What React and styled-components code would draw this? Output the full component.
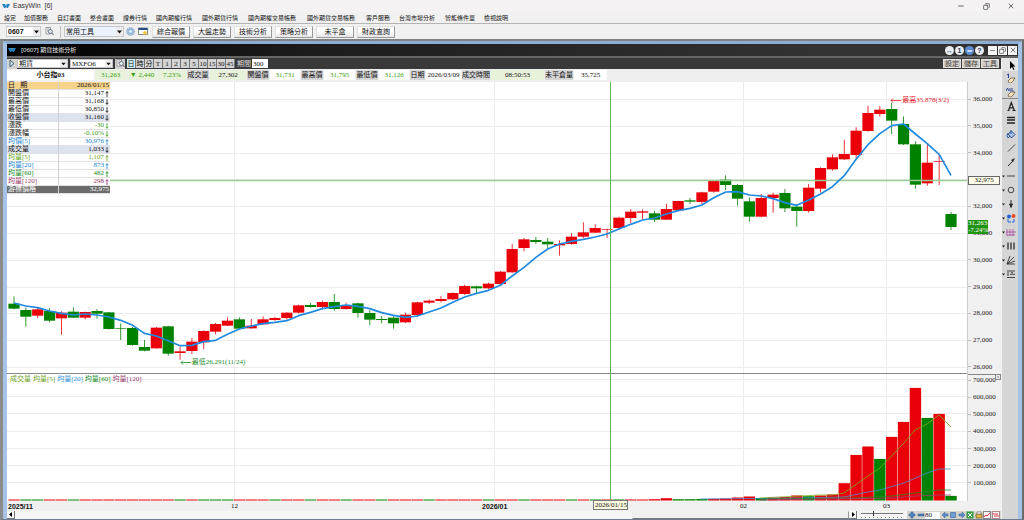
import React, { useState } from 'react';
import styled, { createGlobalStyle, css } from 'styled-components';
import { LuMinus, LuX, LuCopy } from 'react-icons/lu';

const UP = '#ea0009';
const DOWN = '#008200';
const LINE_BLUE = '#1f8ae0';
const FONT_SERIF = '"Liberation Serif", "Noto Sans CJK TC", serif';
const FONT_SANS = '"Liberation Sans", "Noto Sans CJK TC", sans-serif';

const GlobalStyle = createGlobalStyle`
  * {
    box-sizing: border-box;
  }
  body {
    margin: 0;
    background: #efefef;
    color: #111;
    font: 7px/8px ${FONT_SANS};
  }
  button, input, select {
    margin: 0;
    padding: 0;
    border: 0;
    border-radius: 0;
    color: inherit;
    font: inherit;
    background: none;
    appearance: none;
  }
  svg {
    display: block;
  }
`;

/* ---------- data ---------- */

// direction, body top, body bottom, high, low, five day average (three ticks to a unit)
const CANDLE_SETS = [
  {
    base: 840,
    rows: [
      ['d', 71, 86, 49, 88, 69], ['d', 90, 110, 82, 140, 78], ['u', 88, 107, 84, 114, 83],
      ['d', 93, 122, 85, 127, 93], ['u', 98, 115, 94, 164, 100], ['d', 95, 113, 82, 114, 105],
      ['u', 96, 113, 95, 118, 102], ['d', 93, 101, 87, 116, 105], ['d', 97, 147, 96, 149, 111],
      ['d', 145, 147, 130, 180, 121], ['d', 144, 195, 141, 197, 136], ['d', 201, 212, 180, 214, 160],
      ['u', 143, 205, 141, 206, 168], ['d', 139, 221, 137, 227, 182], ['u', 214, 219, 200, 239, 197],
      ['u', 185, 213, 174, 222, 196], ['u', 153, 187, 151, 208, 185], ['u', 132, 155, 129, 163, 181],
      ['u', 122, 137, 112, 138, 163], ['d', 118, 146, 112, 148, 147], ['u', 137, 145, 117, 146, 138],
      ['u', 118, 133, 109, 134, 131], ['u', 114, 120, 110, 123, 127], ['u', 98, 114, 97, 119, 122],
      ['u', 76, 98, 74, 100, 107],
    ],
  },
  {
    base: 600,
    rows: [
      ['d', 315, 321, 309, 323, 337], ['u', 306, 321, 302, 326, 326], ['d', 306, 327, 282, 332, 320],
      ['u', 315, 327, 308, 329, 315], ['d', 310, 339, 308, 353, 319], ['d', 339, 359, 330, 375, 326],
      ['d', 357, 360, 348, 370, 338], ['d', 353, 370, 347, 386, 346], ['u', 344, 367, 338, 369, 352],
      ['u', 307, 345, 305, 350, 348], ['u', 302, 308, 298, 312, 336], ['u', 297, 303, 288, 307, 324],
      ['u', 279, 298, 277, 300, 307], ['u', 258, 282, 254, 285, 291], ['d', 259, 265, 257, 280, 280],
      ['u', 251, 265, 248, 268, 271], ['u', 215, 252, 213, 255, 256], ['u', 147, 217, 132, 219, 228],
      ['u', 118, 144, 114, 154, 202], ['d', 120, 126, 111, 132, 172], ['d', 125, 133, 114, 147, 147],
      ['u', 132, 136, 121, 167, 132], ['u', 110, 132, 99, 134, 124], ['u', 97, 110, 67, 115, 118],
      ['u', 84, 98, 73, 99, 111], ['u', 87, 89, 86, 114, 102], ['u', 53, 84, 50, 86, 87],
    ],
  },
  {
    base: 270,
    rows: [
      ['u', 365, 384, 357, 400, 403], ['u', 364, 368, 359, 388, 390], ['d', 370, 389, 363, 396, 384],
      ['u', 357, 389, 341, 390, 372], ['u', 333, 361, 332, 362, 362], ['d', 331, 335, 324, 342, 355],
      ['u', 307, 336, 305, 342, 345], ['u', 273, 305, 272, 308, 323], ['d', 269, 285, 256, 300, 306],
      ['d', 285, 326, 282, 347, 305], ['d', 334, 380, 322, 395, 315], ['u', 324, 380, 312, 382, 318],
      ['u', 314, 324, 308, 368, 326], ['d', 309, 355, 297, 366, 338], ['d', 350, 363, 342, 410, 346],
      ['u', 293, 363, 282, 368, 330], ['u', 234, 296, 232, 308, 312], ['u', 202, 238, 193, 242, 290],
      ['u', 192, 208, 149, 210, 257], ['u', 122, 195, 112, 205, 208], ['u', 69, 123, 47, 125, 164],
      ['u', 59, 72, 48, 80, 131], ['d', 57, 92, 38, 132, 107], ['d', 102, 163, 79, 165, 102],
      ['d', 163, 284, 154, 296, 132], ['u', 218, 280, 162, 287, 161], ['u', 213, 215, 193, 285, 193],
      ['d', 372, 411, 366, 420, 256],
    ],
  },
];

const CANDLES = CANDLE_SETS.flatMap(({ base, rows }) =>
  rows.map(([dir, ...ticks]) => {
    const [top, bottom, high, low, average] = ticks.map((t) => (t + base) / 3);
    return { dir, top, bottom, high, low, average };
  })
);

const xOf = (i) => 14 + (i * 937) / 79;

const QUIET_DAYS = [1, 2, 5, 14, 16, 17, 18, 22, 25, 28, 31, 35, 40, 43, 47, 49, 51, 56, 57, 58, 63, 67, 73, 77, 79];

const TALL_VOLUMES = [
  1.3, 2.3, 1.3, 1.3, 1.5, 1.7, 2, 3, 4, 2.5, 3, 3.5, 5, 4.3, 5, 6, 17.3, 45.6, 54, 41.6, 63.6, 78.6,
  112.6, 82.6, 86.6, 4.6,
];
const volumeAt = (i) => (i < 54 ? 1 : TALL_VOLUMES[i - 54]);

const VOLUME_LINES = [
  { color: '#7fae1e', points: '760,498 800,496 820,495 832,495 844,493 868,476 880,468 904,443 915,430 927,424 939,415 951,427' },
  { color: '#4a93d0', points: '700,499 800,498 844,497 868,492 880,490 904,483 927,473 939,469 951,469' },
  { color: '#2d8a2d', points: '760,499 856,498 892,496 915,493 939,490 951,490' },
  { color: '#9c4470', points: '760,500 892,498 915,496 939,495 951,495' },
];

const MENUS = [
  ['設定', 20], ['加值服務', 33], ['自訂畫面', 33], ['整合畫面', 33], ['證券行情', 33],
  ['國內期權行情', 46], ['國外期貨行情', 46], ['國內期權交易帳務', 59], ['國外期貨交易帳務', 59],
  ['客戶服務', 33], ['台灣市場分析', 46], ['智能條件單', 39], ['檢視說明', 33],
];

const SHORTCUTS = ['綜合報價', '大盤走勢', '技術分析', '策略分析', '未平盒', '財政查詢'];
const PERIODS = ['日', '時', '分', 'T', '1', '2', '3', '5', '10', '15', '30', '45'];

const QUOTES = [
  { text: '小台指03', w: 87, kind: 'name' },
  { text: '31,263', w: 31, kind: 'tint', green: true },
  { text: '▼ 2,440', w: 30, kind: 'tint', green: true },
  { text: '7.23%', w: 28, kind: 'tint', green: true },
  { text: '成交量', w: 22, kind: 'label' },
  { text: '27,302', w: 36, kind: 'tint' },
  { text: '開盤價', w: 22, kind: 'label' },
  { text: '31,731', w: 30, green: true },
  { text: '最高價', w: 22, kind: 'label' },
  { text: '31,795', w: 31, green: true },
  { text: '最低價', w: 22, kind: 'label' },
  { text: '31,126', w: 30, green: true },
  { text: '日期', w: 15, kind: 'label' },
  { text: '2026/03/09', w: 35 },
  { text: '成交時間', w: 28, kind: 'label' },
  { text: '08:50:53', w: 53, kind: 'tint' },
  { text: '未平倉量', w: 28, kind: 'label' },
  { text: '35,725', w: 33 },
];

const INFO_ROWS = [
  ['開盤價', '31,147', 'up', '#111'],
  ['最高價', '31,168', 'down', '#111'],
  ['最低價', '30,850', 'down', '#111'],
  ['收盤價', '31,160', 'down', '#111', '#dde3ee'],
  ['漲跌', '-30', 'down', '#42a022', null, '#111'],
  ['漲跌幅', '-0.10%', 'down', '#42a022', null, '#111'],
  ['均價[5]', '30,976', 'up', '#2384d4'],
  ['成交量', '1,033', 'down', '#111', '#dde3ee'],
  ['均量[5]', '1,107', 'up', '#69a51c'],
  ['均量[20]', '873', 'up', '#2384d4'],
  ['均量[60]', '482', 'up', '#128a1c'],
  ['均量[120]', '298', 'up', '#96386a'],
];

const PRICES = [36, 35, 34, 33, 32, 31, 30, 29, 28, 27, 26].map((n) => `${n},000`);
const VOLUMES = [7, 6, 5, 4, 3, 2, 1].map((n) => `${n}00,000`);

/* ---------- frame ---------- */

const Page = styled.div`
  display: flex;
  flex-direction: column;
  min-height: 100vh;
`;

const TitleBar = styled.header`
  display: flex;
  align-items: center;
  height: 12px;
  padding: 0 8px 0 2px;
  gap: 3px;
  background: #f5f2f4;
  color: #333;
  white-space: pre;
`;

const Spacer = styled.div`
  flex: 1;
`;

const Gap = styled.div`
  width: 2px;
`;

const RestoreIcon = styled(LuCopy)`
  transform: scaleX(-1);
`;

const CaptionButton = styled.button`
  display: flex;
  justify-content: center;
  width: 10px;
  margin-left: 12px;
  color: #222;
`;

const MenuBar = styled.nav`
  display: flex;
  height: 11px;
  padding-left: 4px;
  font-size: 6px;
  background: #f1f1f1;
`;

const MenuItem = styled.button`
  flex: 0 0 ${({ w }) => w}px;
  text-align: left;
  white-space: nowrap;
`;

const MainToolbar = styled.div`
  display: flex;
  align-items: center;
  height: 16px;
  padding-left: 6px;
  border-top: 1px solid #b4b4b4;
  background: #f0f0f0;
`;

const Divider = styled.i`
  width: 1px;
  height: 12px;
  margin: 0 3px;
  background: #bcbcbc;
`;

const SelectBox = styled.span`
  position: relative;
  display: flex;
  width: ${({ w }) => w}px;
  height: ${({ h }) => h || 11}px;
  border: 1px solid #c4c8cc;
  background: ${({ tint }) => (tint ? '#ebf3fe' : '#fff')};

  select {
    width: 100%;
    padding-left: ${({ pad }) => pad || 1}px;
    font-weight: ${({ bold }) => (bold ? 700 : 400)};
    font-family: ${({ bold }) => (bold ? FONT_SANS : FONT_SERIF)};
    outline: none;
  }

  svg {
    position: absolute;
    top: 0;
    right: 0;
    height: 100%;
    background: #ededed;
    pointer-events: none;
  }
`;

const IconButton = styled.button`
  display: flex;
  align-items: center;
  justify-content: center;
  width: ${({ w }) => w || 10}px;
  height: 10px;
  background: ${({ bg }) => bg || 'transparent'};
`;

const ShortcutBar = styled.div`
  display: flex;
  gap: 3px;
  margin-left: 4px;
`;

const ShortcutButton = styled.button`
  width: 38px;
  height: 12px;
  border: 1px solid #e0e0e0;
  border-right-color: #999;
  border-bottom-color: #999;
  background: linear-gradient(#fff 40%, #e6e6e8);
  white-space: nowrap;
`;

const Workspace = styled.main`
  flex: 1;
  display: flex;
  flex-direction: column;
  border-top: 2px solid #7d8283;
  border-left: 3px solid #8b8b8b;
  border-right: 2px solid #6b6b6b;
  border-bottom: 1px solid #6f7c8b;
`;

const ChildWindow = styled.section`
  flex: 1;
  display: flex;
  flex-direction: column;
  border: 4px solid #a6c3e6;
  border-top: 3px solid #8fadd0;
  border-bottom: 0;
`;

const ChildTitle = styled.div`
  display: flex;
  align-items: center;
  height: 12px;
  padding: 0 1px;
  gap: 1px;
  color: #eee;
  background: linear-gradient(90deg, #000, #1c1c1c 30%, #323232 80%);

  h1 {
    margin: 0 0 0 4px;
    font: 6px/12px "Noto Sans", "Noto Sans CJK TC", sans-serif;
  }
`;

const RoundButton = styled.button`
  width: 9px;
  height: 9px;
  border-radius: 50%;
  background: ${({ blue }) => (blue ? '#5d8cd0' : '#e9edf2')};
  color: ${({ blue }) => (blue ? '#fff' : '#27364e')};
  font-weight: 700;
  line-height: 9px;
`;

const SquareButton = styled.button`
  display: flex;
  align-items: center;
  justify-content: center;
  width: 9px;
  height: 9px;
  background: #f4f4f4;
  color: #333;
`;

const ChildBody = styled.div`
  flex: 1;
  display: grid;
  grid-template-columns: 1fr 17px;
  border-top: 2px solid #666;
`;

const ChartColumn = styled.div`
  display: flex;
  flex-direction: column;
  min-width: 0;
`;

const DarkToolbar = styled.div`
  display: flex;
  align-items: center;
  height: 11px;
  padding-right: 2px;
  background: #393939;
`;

const Periods = styled.div`
  display: flex;
  margin: 0 2px;
  font-family: ${FONT_SERIF};
`;

const PeriodButton = styled.button`
  width: 9px;
  height: 9px;
  border-right: 1px solid #777;
  background: ${({ active }) => (active ? '#cdeff2' : '#d2d2d2')};
`;

const DaysField = styled.label`
  display: flex;
  align-items: center;
  gap: 1px;
  color: #ddd;

  input {
    width: 16px;
    height: 9px;
    padding-left: 1px;
    color: #111;
    background: #fff;
    font-family: ${FONT_SERIF};
  }
`;

const TextButton = styled.button`
  width: 18px;
  height: 9px;
  margin-left: 1px;
  background: #cfccc6;
  border: 1px solid #e6e4e0;
  color: #4a453c;
  line-height: 7px;
`;

const QuoteBar = styled.div`
  display: flex;
  gap: 1px;
  height: 13px;
  padding: 1px 0 2px;
  overflow: hidden;
  background: #efefef;
`;

const QuoteCell = styled.div`
  flex: 0 0 ${({ w }) => w}px;
  line-height: 10px;
  text-align: center;
  white-space: nowrap;
  font-family: ${FONT_SERIF};
  background: #fff;
  color: ${({ green }) => (green ? '#38a012' : '#111')};
  ${({ kind }) => kind === 'tint' && css`background: #e8f2da;`}
  ${({ kind }) => kind === 'label' && css`background: #d6d6d6;`}
  ${({ kind }) => kind === 'name' && css`font-weight: 700;`}
`;

/* ---------- chart ---------- */

const ChartGrid = styled.div`
  flex: 1;
  display: grid;
  grid-template-columns: 1fr 34px;
  min-height: 300px;
`;

const Plot = styled.div`
  position: relative;
  background: #fff;

  > svg {
    position: absolute;
    width: 100%;
    height: 100%;
  }
`;

const Axis = styled.div`
  position: relative;
  display: grid;
  grid-template-rows: 292fr 127fr;
  background: #f0f0f0;
  border-left: 1px solid #ccc;
  font-family: ${FONT_SERIF};
  color: #222;
`;

const Scale = styled.ol`
  display: flex;
  flex-direction: column;
  justify-content: space-between;
  margin: 0;
  padding: ${({ volume }) => (volume ? '1px 0 14px' : '13px 0 3px')};
  list-style: none;
  ${({ volume }) => volume && css`border-top: 1px solid #888;`}

  li {
    display: flex;
    align-items: center;
    gap: 2px;
  }

  li::before {
    content: '';
    width: 3px;
    height: 1px;
    background: #bbb;
  }
`;

const CursorPrice = styled.output`
  position: absolute;
  top: 94px;
  left: 0;
  right: 1px;
  height: 9px;
  border: 1px solid #666;
  background: #fdfde9;
  color: #111;
  line-height: 7px;
  text-align: center;
`;

const LastPrice = styled.output`
  position: absolute;
  top: 138px;
  left: 0;
  width: 20px;
  overflow: hidden;
  background: #1f9410;
  color: #fff;
  line-height: 7px;
  white-space: nowrap;
`;

const ClosePane = styled.button`
  position: absolute;
  top: 292px;
  right: 0;
  width: 6px;
  height: 6px;
  border: 1px solid #888;
  color: #333;
`;

const InfoTable = styled.table`
  position: absolute;
  top: 0;
  left: 0;
  width: 103px;
  border-spacing: 0;
  background: #fff;
  font-family: ${FONT_SERIF};
`;

const InfoRow = styled.tr`
  color: ${({ ink }) => ink};
  background: ${({ bg }) => bg || '#fff'};

  th, td {
    height: 8px;
    padding: 0 1px;
    border-bottom: 1px solid #e2e2e2;
    font-weight: 400;
    line-height: 7px;
    text-align: left;
    white-space: pre;
  }

  th {
    width: 52px;
    color: ${({ labelInk }) => labelInk || 'inherit'};
    border-right: 1px solid #d0d0d0;
  }
`;

const InfoValue = styled.div`
  display: flex;
  align-items: center;
  justify-content: flex-end;
  gap: 1px;
  height: 7px;
`;

const Legend = styled.div`
  position: absolute;
  top: 70%;
  left: 3px;
  display: flex;
  gap: 2px;
  font-family: ${FONT_SERIF};
`;

const LegendItem = styled.span`
  color: ${({ color }) => color};
`;

const Callout = styled.span`
  position: absolute;
  top: ${({ top }) => top}px;
  left: ${({ left }) => left}%;
  display: flex;
  align-items: center;
  gap: 1px;
  color: ${({ color }) => color};
  font-family: ${FONT_SERIF};
  white-space: nowrap;
`;

const DateAxis = styled.div`
  position: relative;
  display: grid;
  grid-template-columns: 223fr 251fr 258fr 143fr 118fr;
  height: 10px;
  padding-left: 1px;
  background: #f0f0f0;
  font-family: ${FONT_SERIF};
  line-height: 11px;

  b {
    font-family: ${FONT_SANS};
  }
`;

const DateTag = styled.output`
  position: absolute;
  top: -1px;
  left: 59%;
  width: 35px;
  height: 10px;
  border: 1px solid #777;
  background: #fbfbdf;
  line-height: 8px;
  text-align: center;
`;

const BottomBar = styled.div`
  display: flex;
  align-items: center;
  height: 8px;
  background: #f5f5f5;
`;

const ScrollTrack = styled.div`
  flex: 1;
  display: flex;
  justify-content: flex-end;
  height: 8px;
`;

const ScrollThumb = styled.div`
  width: 26%;
  border: 1px solid #eee;
  border-right-color: #999;
  border-bottom-color: #777;
  background: #f0f0f0;
`;

const ScrollButton = styled.button`
  display: flex;
  align-items: center;
  justify-content: center;
  width: 8px;
  height: 8px;
  border-right: 1px solid #777;
  border-bottom: 1px solid #777;
  background: #fafafa;
`;

const ZoomSlider = styled.input`
  width: 42px;
  height: 8px;
  margin: 0 4px;
  background:
    linear-gradient(#777, #777) 0 2px / 100% 1px no-repeat,
    repeating-linear-gradient(90deg, #888 0 1px, transparent 1px 4px) 0 6px / 100% 1px no-repeat;

  &::-webkit-slider-thumb {
    appearance: none;
    width: 1px;
    height: 5px;
    margin-bottom: 3px;
    background: #333;
  }
`;

const ChartTools = styled.div`
  display: flex;
  align-items: center;
  justify-content: space-between;
  width: 94px;
  height: 8px;
  padding: 0 1px;
  background: #d6d3cd;

  button {
    width: 8px;
    height: 8px;
  }

  input {
    width: 15px;
    height: 7px;
    background: #fff;
    font-family: ${FONT_SERIF};
    line-height: 7px;
  }
`;

const Palette = styled.aside`
  display: flex;
  flex-direction: column;
  background: #d5d5d5;
  border-left: 1px solid #f2f2f2;
`;

const PaletteButton = styled.button`
  display: flex;
  align-items: center;
  justify-content: flex-end;
  height: 14px;
  padding-right: 2px;
  gap: 1px;
  ${({ divided }) => divided && css`border-bottom: 1px solid #888;`}

  &:first-child {
    height: 13px;
    background: #e6e6e6;
  }
`;

/* ---------- icons ---------- */

const Logo = () => (
  <svg width="8" height="6" viewBox="0 0 8 6" aria-hidden="true">
    <path d="M0 1h3l1 2 1-2h3L6 5H5L4 4 3 5H2z" fill="#2481bd" />
    <path d="M3 1h2L4 3z" fill="#83c3df" />
  </svg>
);

const DownArrow = () => (
  <svg width="7" viewBox="0 0 7 8" aria-hidden="true">
    <path d="M1 3h5L3.500 6z" fill="#111" />
  </svg>
);

const SearchPageIcon = () => (
  <svg width="9" height="9" viewBox="0 0 9 9" fill="none" aria-hidden="true">
    <path d="M1 .5h4.500V7H1zM2 2h2M2 4h1" stroke="#777" fill="#fff" strokeWidth=".7" />
    <circle cx="5.300" cy="4.500" r="2" stroke="#557" fill="#e6f4f2" strokeWidth=".8" />
    <path d="M6.700 6 8.500 8" stroke="#555" />
  </svg>
);

const GearIcon = () => (
  <svg width="9" height="9" viewBox="0 0 9 9" fill="none" aria-hidden="true">
    <circle cx="4.500" cy="4.500" r="3.700" stroke="#7ba3c9" strokeWidth="1.200" strokeDasharray="1.500 .7" />
    <circle cx="4.500" cy="4.500" r="2.700" fill="#a8c8e6" stroke="#6c96bf" strokeWidth=".6" />
    <circle cx="4.500" cy="4.500" r="1.100" fill="#fff" />
  </svg>
);

const WindowStarIcon = () => (
  <svg width="10" height="9" viewBox="0 0 10 9" aria-hidden="true">
    <path d="M.5 1h9v6.500h-9z" fill="#fff" stroke="#456" strokeWidth=".7" />
    <path d="M.5 1h9v2h-9z" fill="#2c4f86" />
    <path d="m7 3 .8 1.700 2 .2-1.500 1.300.4 2L7 7.300l-1.700.9.4-2-1.500-1.300 2-.2z" fill="#f0c33c" />
  </svg>
);

const PlayIcon = () => (
  <svg width="8" height="9" viewBox="0 0 8 9" aria-hidden="true">
    <path d="M2 1v7l4-3.500z" fill="#bfe1ee" stroke="#345" strokeWidth=".8" />
  </svg>
);

const ArrowLeft = () => (
  <svg width="11" height="5" viewBox="0 0 11 5" fill="none" stroke="currentColor" strokeWidth=".8" aria-hidden="true">
    <path d="M11 2.500H1M3 .5l-2 2 2 2" />
  </svg>
);

const TrendArrow = ({ dir }) => (
  <svg width="4" height="6" viewBox="0 0 4 6" fill="none" stroke="currentColor" strokeWidth=".8" aria-label={dir}>
    <path d={dir === 'up' ? 'M2 6V.7M.5 2.300 2 .7l1.500 1.600' : 'M2 0v5.300M.5 3.700 2 5.300l1.500-1.600'} />
  </svg>
);

const TriangleIcon = ({ right }) => (
  <svg width="4" height="5" viewBox="0 0 4 5" aria-hidden="true">
    <path d={right ? 'M1 0v5l3-2.500z' : 'M3 0v5L0 2.500z'} fill="#000" />
  </svg>
);

const eraser = <path d="m2 8 3-3h4L7 8l-2 2H3z" fill="#fbe4b8" stroke="#54463a" strokeWidth=".7" />;

const PALETTE = [
  { name: '指標', art: <path d="M4 1v8l2-2 1.500 3 1-.5L7 6.500h2.500z" fill="#000" /> },
  { name: '擦除', art: <>{eraser}<path d="m1 2 1.500-1v4" stroke="#23459c" fill="none" /></> },
  { name: '全部擦除', divided: true, art: <>{eraser}<path d="M0 4l1.500-3L3 4M4 1v3h1M6 1v3h1.500" stroke="#2b3f99" fill="none" strokeWidth=".9" /></> },
  { name: '文字', art: <path d="M1.500 9.500h2M6.500 9.500h3M2.500 9.500 5.300 1.500 8.300 9.500M3.500 6.800h3.800" stroke="#222" fill="none" strokeWidth="1.200" /> },
  { name: '線寬', art: <path d="M1 2.500h8M1 5h8M1 8h8" stroke="#222" strokeWidth="1.300" /> },
  { name: '填色', art: <><path d="m2 5 3.500-3L9 5.500 5.500 9z" fill="#a9c2ee" stroke="#26417c" strokeWidth=".9" /><path d="M2 4q-2 3 0 5l2-2M5 1v4" stroke="#2855a8" fill="none" /></> },
  { name: '趨勢線', art: <path d="m2 8.500 7-7" stroke="#333" strokeWidth=".9" /> },
  { name: '箭頭', art: <><path d="m2 9 5-5" stroke="#222" /><path d="m5 3 4-2-2 4z" fill="#222" /></> },
  { name: '水平線', more: true, art: <path d="M1 5h8" stroke="#333" strokeWidth=".9" /> },
  { name: '圓形', more: true, art: <circle cx="5" cy="5" r="2.800" stroke="#333" fill="none" strokeWidth=".9" /> },
  { name: '標記', more: true, art: <path d="M5 1v8M3.500 5h3L5 8z" stroke="#222" fill="#222" strokeWidth=".9" /> },
  { name: '紅藍標', more: true, art: <><circle cx="3" cy="3.500" r="2" fill="#235fd0" /><circle cx="7.500" cy="3" r="2" fill="#ec4c23" /><path d="M2 6v3h3M8 6v3H6" stroke="#235fd0" fill="none" /></> },
  { name: '區間', more: true, art: <path d="M1 2v7M4 2v7M7 2v7M0 5h10M1 8h8" stroke="#a74aa0" strokeWidth=".8" /> },
  { name: '週期線', more: true, art: <path d="M2 1.500v7M5 1.500v7M8 1.500v7" stroke="#333" strokeWidth="1.300" /> },
  { name: '扇形線', more: true, art: <path d="M1 9 4 1M1 9l7-7M1 9l8-3M1 9h8" stroke="#333" strokeWidth=".9" /> },
  { name: '黃金分割', more: true, art: <path d="M1 2h8M1 8.500h8M4 5.300h5M2 3v4M5 3.700h2" stroke="#333" strokeWidth=".9" /> },
];

const ChartDrawing = () => (
  <svg viewBox="7 82 960 419" preserveAspectRatio="none" role="img" aria-label="小台指03 日K線與成交量">
    <g stroke="#ececec" shapeRendering="crispEdges">
      {PRICES.map((p, i) => (
        <line key={p} x1="7" x2="967" y1={99.5 + i * 26.8} y2={99.5 + i * 26.8} />
      ))}
      {VOLUMES.map((v, i) => (
        <line key={v} x1="7" x2="967" y1={379.5 + i * 17.2} y2={379.5 + i * 17.2} />
      ))}
      <path d="M234.500 82V501M494.500 82V501M743.500 82V501M886.500 82V501" />
    </g>
    <path d="M7 373.500H967" stroke="#888" />
    {CANDLES.map((c, i) => (
      <g key={xOf(i)} fill={c.dir === 'u' ? UP : DOWN}>
        <rect x={xOf(i) - 0.4} y={c.high} width=".8" height={c.low - c.high} />
        <rect x={xOf(i) - 5.6} y={c.top} width="11.200" height={c.bottom - c.top} />
      </g>
    ))}
    <path d="M7 180.500H967" stroke="#9acb94" strokeWidth="1.500" />
    <polyline
      points={CANDLES.map((c, i) => `${xOf(i)},${c.average}`).join(' ')}
      fill="none"
      stroke={LINE_BLUE}
      strokeWidth="1.700"
      strokeLinejoin="round"
    />
    {CANDLES.map((c, i) => (
      <rect
        key={xOf(i)}
        x={xOf(i) - 5.7}
        y={500.5 - volumeAt(i)}
        width="11.400"
        height={volumeAt(i)}
        fill={QUIET_DAYS.includes(i) ? DOWN : UP}
      />
    ))}
    {VOLUME_LINES.map((l) => (
      <polyline key={l.color} points={l.points} fill="none" stroke={l.color} strokeWidth=".8" />
    ))}
    <path d="M610.500 82V501" stroke="#5fb35f" />
  </svg>
);

const InfoPanel = () => (
  <InfoTable>
    <tbody>
      <InfoRow bg="#f6d28b" ink="#111">
        <th scope="row">日   期</th>
        <td><InfoValue>2026/01/15</InfoValue></td>
      </InfoRow>
      {INFO_ROWS.map(([label, value, dir, ink, bg, labelInk]) => (
        <InfoRow key={label} ink={ink} bg={bg} labelInk={labelInk}>
          <th scope="row">{label}</th>
          <td><InfoValue>{value}<TrendArrow dir={dir} /></InfoValue></td>
        </InfoRow>
      ))}
      <InfoRow bg="#6c6c6c" ink="#fff">
        <th scope="row">游標價格</th>
        <td><InfoValue>32,975</InfoValue></td>
      </InfoRow>
    </tbody>
  </InfoTable>
);

const Picker = ({ label, value, ...rest }) => (
  <SelectBox {...rest}>
    <select aria-label={label} defaultValue={value}>
      <option>{value}</option>
    </select>
    <DownArrow />
  </SelectBox>
);

const TOOL_ICONS = [
  { name: '左移', art: <path d="M4 1v2h3v2H4v2L1 4z" fill="#5d8fc9" stroke="#345f94" strokeWidth=".5" /> },
  { name: '全部', art: <path d="M1.500 1.500h5v5h-5z" fill="#6fa0d8" stroke="#345f94" strokeWidth=".6" /> },
  { name: '右移', art: <path d="M4 1v2H1v2h3v2l3-3z" fill="#5d8fc9" stroke="#345f94" strokeWidth=".5" /> },
  { name: 'Excel', art: <><path d="M.5.5h7v7h-7z" fill="#369b45" /><path d="m2 2 4 4M6 2 2 6" stroke="#fff" /></> },
  { name: '列印', art: <><path d="M1 3h6v4H1z" fill="#e0b847" stroke="#55481e" strokeWidth=".6" /><path d="M2 1h4v2H2z" fill="#fff" stroke="#555" strokeWidth=".5" /></> },
  { name: '走勢', art: <><path d="M.5.5h7v7h-7z" fill="#fff" stroke="#444" strokeWidth=".6" /><path d="m1 6 2-2 1 1 3-3" stroke="#d33" fill="none" /></> },
  { name: '比較', art: <><path d="M.5.5h7v7h-7z" fill="#fff" stroke="#844" strokeWidth=".6" /><path d="M1 3h5M2 5h5" stroke="#d33" /></> },
];

const App = () => {
  const [period, setPeriod] = useState('日');

  return (
    <Page>
      <GlobalStyle />
      <TitleBar>
        <Logo />
        EasyWin  [6]
        <Spacer />
        <CaptionButton aria-label="最小化"><LuMinus size={8} /></CaptionButton>
        <CaptionButton aria-label="還原"><RestoreIcon size={7} /></CaptionButton>
        <CaptionButton aria-label="關閉"><LuX size={8} /></CaptionButton>
      </TitleBar>
      <MenuBar>
        {MENUS.map(([label, w]) => <MenuItem key={label} w={w}>{label}</MenuItem>)}
      </MenuBar>
      <MainToolbar>
        <Picker label="商品代碼" value="0607" w={35} bold />
        <IconButton w={16} aria-label="查詢"><SearchPageIcon /></IconButton>
        <Divider />
        <Picker label="工具列" value="常用工具" w={60} tint />
        <IconButton w={13} aria-label="設定"><GearIcon /></IconButton>
        <IconButton w={11} aria-label="新視窗"><WindowStarIcon /></IconButton>
        <ShortcutBar>
          {SHORTCUTS.map((label) => <ShortcutButton key={label}>{label}</ShortcutButton>)}
        </ShortcutBar>
      </MainToolbar>
      <Workspace>
        <ChildWindow>
          <ChildTitle>
            <Logo />
            <h1>[0607] 期貨技術分析</h1>
            <Spacer />
            <RoundButton aria-label="切換">↔</RoundButton>
            <RoundButton>1</RoundButton>
            <RoundButton blue aria-label="同步">∞</RoundButton>
            <RoundButton>?</RoundButton>
            <Gap />
            <SquareButton aria-label="最小化"><LuMinus size={7} /></SquareButton>
            <SquareButton aria-label="還原"><RestoreIcon size={7} /></SquareButton>
            <SquareButton aria-label="關閉"><LuX size={8} /></SquareButton>
          </ChildTitle>
          <ChildBody>
            <ChartColumn>
              <DarkToolbar>
                <IconButton bg="#d2d2d2" aria-label="展開"><PlayIcon /></IconButton>
                <Picker label="市場" value="期貨" w={51} h={9} />
                <Gap />
                <Picker label="商品" value="MXFO6" w={43} h={9} />
                <Gap />
                <IconButton bg="#d2d2d2" aria-label="查詢商品"><SearchPageIcon /></IconButton>
                <Periods>
                  {PERIODS.map((p) => (
                    <PeriodButton key={p} active={p === period} onClick={() => setPeriod(p)}>{p}</PeriodButton>
                  ))}
                </Periods>
                <DaysField>期間 <input defaultValue="300" /></DaysField>
                <Spacer />
                <TextButton>設定</TextButton>
                <TextButton>儲存</TextButton>
                <TextButton>工具</TextButton>
              </DarkToolbar>
              <QuoteBar>
                {QUOTES.map(({ text, ...cell }) => <QuoteCell key={text} {...cell}>{text}</QuoteCell>)}
              </QuoteBar>
              <ChartGrid>
                <Plot>
                  <ChartDrawing />
                  <InfoPanel />
                  <Callout top={14} left={92} color="#e8202c"><ArrowLeft />最高35,878(3/2)</Callout>
                  <Callout top={276} left={18} color="#1d8c2a"><ArrowLeft />最低26,291(11/24)</Callout>
                  <Legend>
                    <LegendItem color="#6fa51d">成交量</LegendItem>
                    <LegendItem color="#6fa51d">均量[5]</LegendItem>
                    <LegendItem color="#2b8fdc">均量[20]</LegendItem>
                    <LegendItem color="#128a1c">均量[60]</LegendItem>
                    <LegendItem color="#96386a">均量[120]</LegendItem>
                  </Legend>
                </Plot>
                <Axis>
                  <Scale>{PRICES.map((p) => <li key={p}>{p}</li>)}</Scale>
                  <Scale volume>{VOLUMES.map((v) => <li key={v}>{v}</li>)}</Scale>
                  <CursorPrice>32,975</CursorPrice>
                  <LastPrice>31,263<br />-7.24%</LastPrice>
                  <ClosePane aria-label="關閉成交量"><LuX size={4} /></ClosePane>
                </Axis>
              </ChartGrid>
              <DateAxis>
                <b>2025/11</b>
                <span>12</span>
                <b>2026/01</b>
                <span>02</span>
                <span>03</span>
                <DateTag>2026/01/15</DateTag>
              </DateAxis>
              <BottomBar>
                <ScrollButton aria-label="向左捲動"><TriangleIcon /></ScrollButton>
                <ScrollTrack><ScrollThumb /></ScrollTrack>
                <ScrollButton aria-label="向右捲動"><TriangleIcon right /></ScrollButton>
                <ZoomSlider type="range" aria-label="縮放" defaultValue={30} />
                <ChartTools>
                  <button aria-label="放大">
                    <svg viewBox="0 0 8 8"><path d="M3 1h2v2h2v2H5v2H3V5H1V3h2z" fill="#4c86c6" stroke="#28507f" strokeWidth=".5" /></svg>
                  </button>
                  <button aria-label="縮小">
                    <svg viewBox="0 0 8 8"><path d="M1 3h6v2H1z" fill="#4c86c6" stroke="#28507f" strokeWidth=".5" /></svg>
                  </button>
                  <input aria-label="K線數" defaultValue="80" />
                  {TOOL_ICONS.map(({ name, art }) => (
                    <button key={name} aria-label={name}>
                      <svg viewBox="0 0 8 8" fill="none">{art}</svg>
                    </button>
                  ))}
                </ChartTools>
              </BottomBar>
            </ChartColumn>
            <Palette>
              {PALETTE.map(({ name, art, more, divided }) => (
                <PaletteButton key={name} aria-label={name} divided={divided}>
                  {more && <svg width="3" height="3" viewBox="0 0 3 3"><path d="M0 .5h3l-1.500 2z" fill="#222" /></svg>}
                  <svg width="10" height="10" viewBox="0 0 10 10">{art}</svg>
                </PaletteButton>
              ))}
            </Palette>
          </ChildBody>
        </ChildWindow>
      </Workspace>
    </Page>
  );
};

export default App;
